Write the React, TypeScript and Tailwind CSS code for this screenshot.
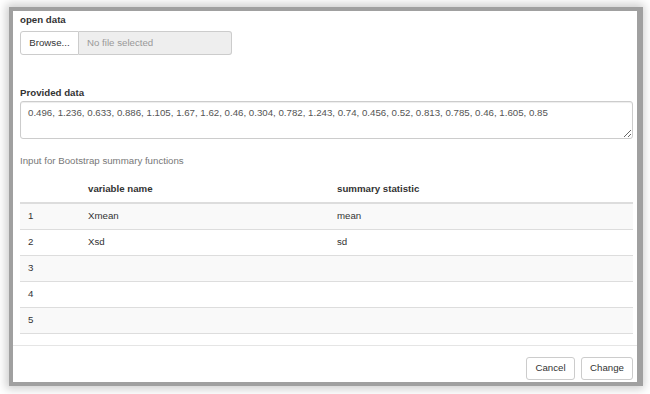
import React from "react";

interface Row {
  n: string;
  name: string;
  stat: string;
}

const rows: Row[] = [
  { n: "1", name: "Xmean", stat: "mean" },
  { n: "2", name: "Xsd", stat: "sd" },
  { n: "3", name: "", stat: "" },
  { n: "4", name: "", stat: "" },
  { n: "5", name: "", stat: "" },
];

const data =
  "0.496, 1.236, 0.633, 0.886, 1.105, 1.67, 1.62, 0.46, 0.304, 0.782, 1.243, 0.74, 0.456, 0.52, 0.813, 0.785, 0.46, 1.605, 0.85";

export default function App() {
  return (
    <div className="min-h-screen bg-white pl-[13px] pt-[11px] font-['Liberation_Sans',Arial,sans-serif] text-[9.7px] text-[#333]">
      <div className="flex h-[371px] w-[624px] flex-col bg-white shadow-[2px_0_0_4px_#a0a0a0,0_0_0_4px_#a0a0a0,0_0_9px_7px_rgba(0,0,0,0.2)]">
        <div className="pl-[7px] pr-[4px] pt-[2px]">
          {/* open data */}
          <div className="font-bold leading-[14px]">open data</div>
          <div className="mt-[4px] flex h-[24px] w-[212px]">
            <div className="flex w-[59px] items-center justify-center rounded-l-[3px] border border-[#ccc] bg-white">
              Browse...
            </div>
            <div className="flex flex-1 items-center rounded-r-[3px] border border-l-0 border-[#ccc] bg-[#eee] pl-[8px] text-[#999]">
              No file selected
            </div>
          </div>

          {/* provided data */}
          <div className="mt-[31px] font-bold leading-[14px]">Provided data</div>
          <textarea
            readOnly
            value={data}
            className="mt-[1px] block h-[38px] w-full rounded-[3px] border border-[#ccc] px-[7px] pt-[4px] leading-[14px] text-[#555] shadow-[inset_0_1px_1px_rgba(0,0,0,0.075)] outline-none"
          />

          <div className="mt-[15px] leading-[14px] text-[#777]">
            Input for Bootstrap summary functions
          </div>

          {/* table */}
          <div className="mt-[9px]">
            <div className="grid h-[27px] grid-cols-[60px_249px_1fr] items-center border-b-2 border-[#ddd] font-bold">
              <div className="pl-[8px]"></div>
              <div className="pl-[8px]">variable name</div>
              <div className="pl-[8px]">summary statistic</div>
            </div>
            {rows.map((r, i) => (
              <div
                key={r.n}
                className={`grid h-[26px] grid-cols-[60px_249px_1fr] items-center border-b border-[#ddd] ${
                  i % 2 === 0 ? "bg-[#f9f9f9]" : "bg-white"
                }`}
              >
                <div className="pl-[8px]">{r.n}</div>
                <div className="pl-[8px]">{r.name}</div>
                <div className="pl-[8px]">{r.stat}</div>
              </div>
            ))}
          </div>
        </div>

        {/* footer */}
        <div className="mt-[11px] flex justify-end gap-[6px] border-t border-[#e5e5e5] pr-[4px] pt-[11px]">
          <button className="h-[23px] w-[49px] rounded-[3px] border border-[#ccc] bg-white text-[#333]">
            Cancel
          </button>
          <button className="h-[23px] w-[52px] rounded-[3px] border border-[#ccc] bg-white text-[#333]">
            Change
          </button>
        </div>
      </div>
    </div>
  );
}
